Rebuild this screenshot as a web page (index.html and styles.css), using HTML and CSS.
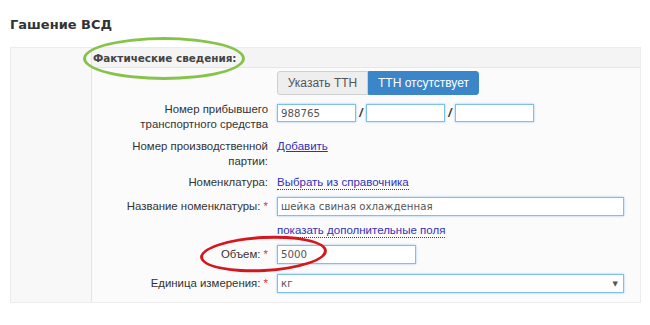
FILE: index.html
```html
<!DOCTYPE html>
<html lang="ru">
<head>
<meta charset="utf-8">
<title>Гашение ВСД</title>
<link rel="stylesheet" href="styles.css">
</head>
<body>
<h1 class="title">Гашение ВСД</h1>
<div class="panel">
  <div class="side"></div>
  <div class="main">
    <div class="head">Фактические сведения:</div>
    <div class="body">
      <div class="form">
        <div class="row row-btns">
          <div class="label"></div>
          <div class="ctrl">
            <div class="btn-group">
              <span class="btn">Указать ТТН</span>
              <span class="btn btn-active">ТТН отсутствует</span>
            </div>
          </div>
        </div>
        <div class="row row-2l">
          <div class="label">Номер прибывшего<br>транспортного средства</div>
          <div class="ctrl ctrl-top">
            <span class="input input-s">988765</span>
            <span class="sep">/</span>
            <span class="input input-s"></span>
            <span class="sep">/</span>
            <span class="input input-s"></span>
          </div>
        </div>
        <div class="row row-2l">
          <div class="label">Номер производственной<br>партии:</div>
          <div class="ctrl"><a class="link">Добавить</a></div>
        </div>
        <div class="row row-1l row-tight">
          <div class="label">Номенклатура:</div>
          <div class="ctrl"><a class="link link-dot">Выбрать из справочника</a></div>
        </div>
        <div class="row row-field">
          <div class="label">Название номенклатуры: <span class="req">*</span></div>
          <div class="ctrl"><span class="input input-l">шейка свиная охлажденная</span></div>
        </div>
        <div class="row row-1l">
          <div class="label"></div>
          <div class="ctrl"><a class="link link-dot">показать дополнительные поля</a></div>
        </div>
        <div class="row row-field">
          <div class="label">Объем: <span class="req">*</span></div>
          <div class="ctrl"><span class="input input-m">5000</span></div>
        </div>
        <div class="row row-field row-last">
          <div class="label">Единица измерения: <span class="req">*</span></div>
          <div class="ctrl"><span class="input input-l select"><span>кг</span><span class="caret">▼</span></span></div>
        </div>
      </div>
    </div>
  </div>
</div>
<div class="ring ring-green"></div>
<div class="ring ring-red"></div>
</body>
</html>
```

FILE: styles.css
```css
html, body {
  margin: 0;
  padding: 0;
  background: #ffffff;
}
body {
  width: 650px;
  height: 325px;
  overflow: hidden;
  position: relative;
  font-family: "Liberation Sans", Arial, sans-serif;
  color: #333;
}
.title {
  margin: 0;
  padding: 17px 10px 0;
  font-family: "DejaVu Sans", Verdana, sans-serif;
  font-size: 13px;
  line-height: 16px;
  font-weight: bold;
  color: #333;
}
.panel {
  margin: 14px 0 0 10px;
  width: 631px;
  height: 256px;
  display: flex;
  border: 1px solid #ececec;
  box-sizing: border-box;
  background: #f7f7f7;
}
.side {
  width: 80px;
  flex: none;
  border-right: 1px solid #e4e4e4;
  background: #f8f8f8;
}
.main {
  flex: 1;
  display: flex;
  flex-direction: column;
}
.head {
  height: 19px;
  border-bottom: 1px solid #e6e6e6;
  background: #f4f4f4;
  font-family: "DejaVu Sans", Verdana, sans-serif;
  font-size: 10.4px;
  font-weight: bold;
  line-height: 20px;
  color: #444;
  padding-left: 1px;
}
.body {
  flex: 1;
  background: #fbfbfb;
  padding-top: 3px;
}
.form {
  display: flex;
  flex-direction: column;
  gap: 7px;
}
.row {
  display: flex;
  align-items: center;
  column-gap: 9px;
}
.label {
  width: 176px;
  flex: none;
  text-align: right;
  font-size: 11.4px;
  line-height: 15px;
  color: #333;
}
.req {
  color: #d33;
}
.ctrl {
  display: flex;
  align-items: center;
}
.row-2l {
  align-items: flex-start;
  height: 30px;
}
.row-1l {
  height: 15px;
}
.row-tight {
  margin-top: -1px;
}
.row-field {
  height: 19px;
}
.row-last {
  margin-top: 3px;
}
.ctrl-top {
  padding-top: 2px;
}
.btn-group {
  display: flex;
  height: 24px;
}
.btn {
  display: flex;
  align-items: center;
  justify-content: center;
  box-sizing: border-box;
  font-size: 12px;
  color: #555;
  background: #eeeeee;
  border: 1px solid #cfcfcf;
  width: 91px;
  border-radius: 3px 0 0 3px;
}
.btn-active {
  width: 111px;
  background: #3a86c8;
  border-color: #3a86c8;
  color: #fff;
  border-radius: 0 3px 3px 0;
}
.input {
  display: flex;
  align-items: center;
  box-sizing: border-box;
  height: 19px;
  padding: 0 3px;
  background: #fff;
  border: 1px solid #7fc0e8;
  box-shadow: 0 0 2px rgba(102, 175, 233, 0.7);
  font-family: "DejaVu Sans", Verdana, sans-serif;
  font-size: 10.2px;
  color: #555;
}
.input-s {
  width: 79px;
  height: 18px;
}
.input-m {
  width: 139px;
}
.input-l {
  width: 347px;
}
.select {
  justify-content: space-between;
  padding-right: 5px;
}
.caret {
  font-size: 7px;
  color: #555;
}
.sep {
  width: 10px;
  text-align: center;
  font-size: 12px;
  font-style: italic;
  font-weight: bold;
  color: #333;
}
.link {
  font-size: 11.5px;
  line-height: 15px;
  color: #3030b8;
  text-decoration: underline;
  cursor: pointer;
}
.link-dot {
  text-decoration: none;
  border-bottom: 1px dotted #3030b8;
  line-height: 13px;
}
.ring {
  position: absolute;
  border-radius: 50%;
  box-sizing: border-box;
}
.ring-green {
  left: 83px;
  top: 37px;
  width: 162px;
  height: 43px;
  border: 3px solid #86c34a;
}
.ring-red {
  left: 200px;
  top: 236px;
  width: 127px;
  height: 36px;
  border: 3px solid #d8141c;
  transform: rotate(-3deg);
}
```
